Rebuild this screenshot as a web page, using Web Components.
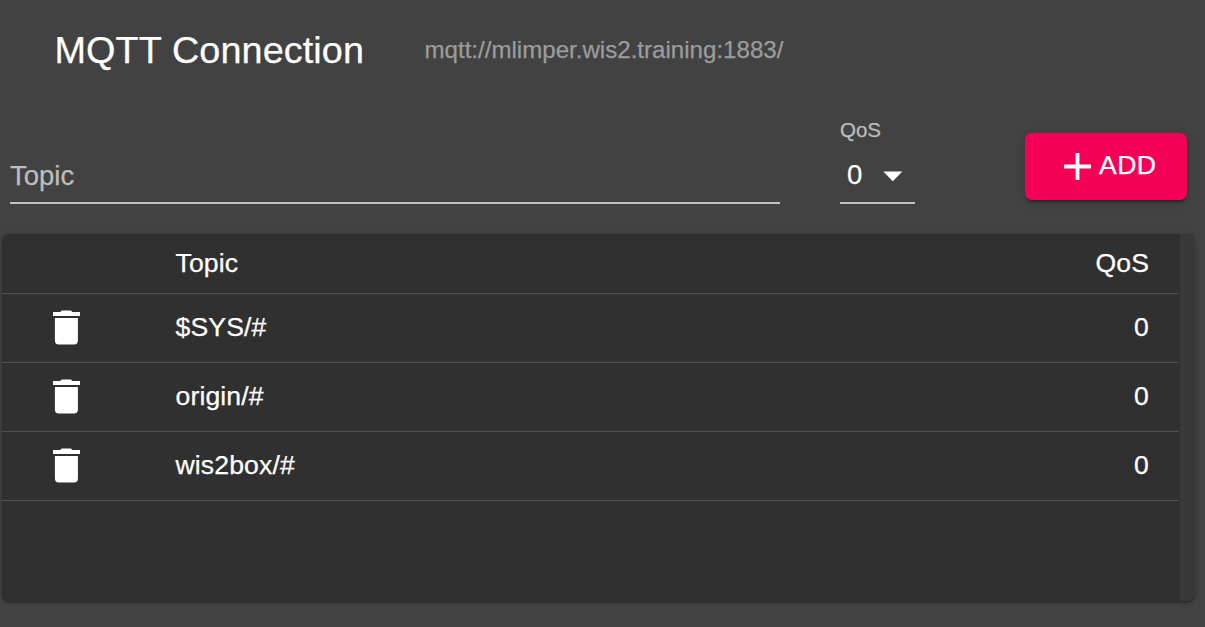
<!DOCTYPE html>
<html lang="en">
<head>
<meta charset="utf-8">
<title>MQTT Connection</title>
<style>
body{margin:0;background:#424242;color:#fff;font-family:"Liberation Sans",Arial,sans-serif;height:627px;overflow:hidden;-webkit-text-stroke:.25px currentColor}
</style>
</head>
<body>
<mqtt-page></mqtt-page>
<script>
const define = (name, html) => customElements.define(name, class extends HTMLElement {
  constructor() {
    super();
    const t = document.createElement('template');
    t.innerHTML = html;
    this.attachShadow({ mode: 'open' }).appendChild(t.content.cloneNode(true));
  }
});

define('connection-header', `
<style>
:host{display:flex;align-items:center;height:100px;padding-left:54.5px;box-sizing:border-box}
h1{margin:0;font-weight:400;font-size:37.8px;letter-spacing:.1px;line-height:60px;width:370px;white-space:nowrap}
span{font-size:24.1px;line-height:34px;color:#9c9c9c;white-space:nowrap}
</style>
<h1><slot name="title"></slot></h1><span><slot></slot></span>`);

define('topic-field', `
<style>
:host{display:flex;flex-direction:column;justify-content:flex-end;box-sizing:border-box;width:770px;height:104px;border-bottom:2px solid #c0c0c0}
label{font-size:27.5px;line-height:32px;color:#bdbdbd;margin-bottom:10px}
</style>
<label><slot></slot></label>`);

define('qos-select', `
<style>
:host{display:flex;flex-direction:column;box-sizing:border-box;width:75px;height:104px;border-bottom:2px solid #c0c0c0}
label{font-size:20.5px;line-height:24px;color:#bdbdbd;margin-top:18px}
div{display:flex;align-items:center;height:32px;margin-top:14px;padding:3px 0 0 7px}
span{font-size:27.5px;line-height:32px;width:36px}
svg{display:block;margin-top:3px}
</style>
<label><slot name="label"></slot></label>
<div><span><slot></slot></span><svg width="20" height="11" viewBox="0 0 20 11"><path d="M0.3 .5h19l-9.5 9.7z" fill="#fff"/></svg></div>`);

define('add-button', `
<style>
:host{display:block}
button{display:flex;align-items:center;width:162px;height:67px;border:0;border-radius:7px;background:#f50057;color:#fff;font:26.6px "Liberation Sans",Arial,sans-serif;letter-spacing:.45px;padding:0 0 0 39px;box-shadow:0 5px 2px -3px rgba(0,0,0,.2),0 3px 3px rgba(0,0,0,.14),0 2px 8px rgba(0,0,0,.12);-webkit-text-stroke:.25px #fff}
svg{display:block;margin-right:8px}
span{position:relative;top:-1px}
</style>
<button><svg width="27" height="27" viewBox="0 0 27 27"><path d="M11.6 0h3.8v11.6H27v3.8H15.4V27h-3.8V15.4H0v-3.8h11.6z" fill="#fff"/></svg><span><slot></slot></span></button>`);

define('topic-table', `
<style>
:host{display:block;box-sizing:border-box;margin:0 10px 0 2px;width:1193px;height:367px;padding-right:15px;border-radius:7px;overflow:hidden;background:#393939;box-shadow:0 3px 2px -1px rgba(0,0,0,.2),0 1px 2px rgba(0,0,0,.14),0 1px 5px rgba(0,0,0,.12)}
div{height:100%;background:#303030}
</style>
<div><slot></slot></div>`);

define('topic-row', `
<style>
:host{display:grid;grid-template-columns:173.5px 1fr auto;align-items:center;box-sizing:border-box;height:69px;width:1177px;padding:0 30px 2px 0;border-bottom:1px solid #515151;font-size:26.6px;letter-spacing:.12px;line-height:38px}
:host([head]){height:60px}
:host([head]) svg{visibility:hidden}
svg{display:block;margin-left:51px}
</style>
<svg width="27" height="35" viewBox="0 0 27 35"><path d="M0 1.9h7.2L8.7.4h9.2l1.5 1.5H27v4.2H0zM1.9 8h23v22.6a3.9 3.9 0 0 1-3.9 3.9H5.8a3.9 3.9 0 0 1-3.9-3.9z" fill="#fff"/></svg>
<span><slot></slot></span><span><slot name="qos"></slot></span>`);

define('mqtt-page', `
<style>
:host{display:block;height:627px}
.form{display:flex;padding-left:10px;height:134px;box-sizing:border-box}
qos-select{margin-left:60px}
add-button{margin:33px 0 0 110px}
</style>
<connection-header><span slot="title">MQTT Connection</span>mqtt://mlimper.wis2.training:1883/</connection-header>
<div class="form"><topic-field>Topic</topic-field><qos-select><span slot="label">QoS</span>0</qos-select><add-button>ADD</add-button></div>
<topic-table>
<topic-row head>Topic<span slot="qos">QoS</span></topic-row>
<topic-row>$SYS/#<span slot="qos">0</span></topic-row>
<topic-row>origin/#<span slot="qos">0</span></topic-row>
<topic-row>wis2box/#<span slot="qos">0</span></topic-row>
</topic-table>`);
</script>
</body>
</html>
